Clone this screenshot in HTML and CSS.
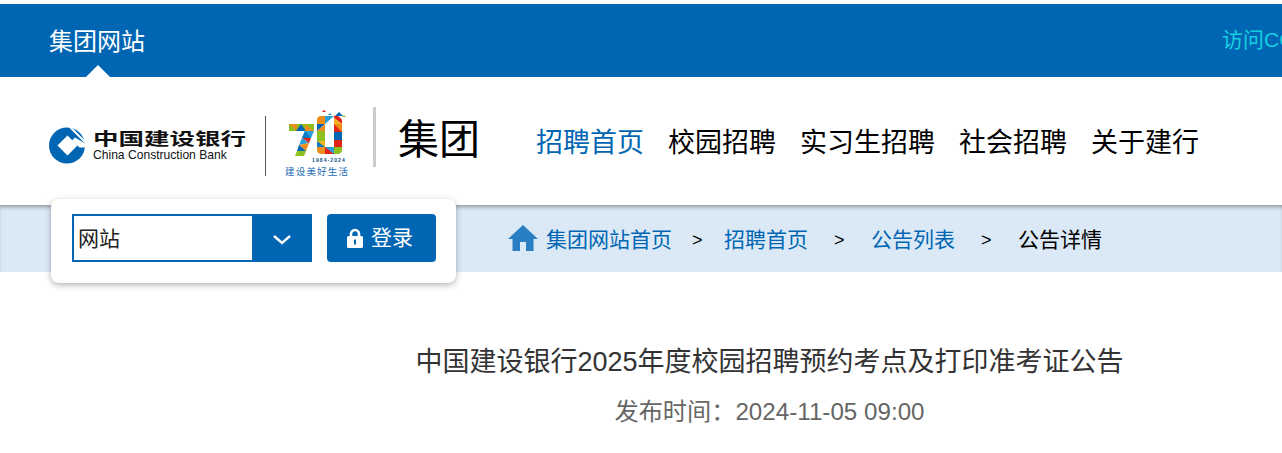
FILE: index.html
```html
<!DOCTYPE html>
<html lang="zh-CN">
<head>
    <meta charset="UTF-8">
    <title>中国建设银行2025年度校园招聘预约考点及打印准考证公告</title>
    <link rel="stylesheet" href="styles.css">
</head>
<body>
    <!-- Top bar -->
    <div class="top-bar">
        <a class="top-tab" href="#">集团网站</a>
        <a class="top-link" href="#">访问CCB</a>
    </div>

    <!-- Header -->
    <div class="header">
        <div class="logo-ccb">
            <svg class="logo-mark" viewBox="0 0 36 37" xmlns="http://www.w3.org/2000/svg">
                <circle cx="18" cy="18.500" r="18" fill="#0066b3"/>
                <path d="M20 -1L37 16" stroke="#fff" stroke-width="2" fill="none"/>
                <path d="M18.500 8.500L28.500 18.500L18.500 28.500L8.500 18.500Z" fill="#fff"/>
                <path d="M23 13.500L26 10.500L37 17V20.500H30.500Z" fill="#fff"/>
            </svg>
            <div class="logo-text">
                <div class="logo-cn">中国建设银行</div>
                <div class="logo-en">China Construction Bank</div>
            </div>
        </div>
        <div class="logo-70">
            <svg class="mark-70" viewBox="0 0 64 56" xmlns="http://www.w3.org/2000/svg">
                <!-- confetti on top of the 0 -->
                <path d="M37 4L39 2L41 4Z" fill="#e2231a"/>
                <path d="M43 7L45 5L47 7Z" fill="#2a9fd8"/>
                <path d="M47 9L49 7L51 9Z" fill="#f5b21a"/>
                <path d="M50 8L54 4L58 8Z" fill="#0066b3"/>
                <path d="M57 9L59 7L61 9Z" fill="#8cc11f"/>
                <!-- 7, top bar -->
                <path d="M4 16H12V23H4Z" fill="#f08c1a"/>
                <path d="M4 16L12 23H4Z" fill="#8cc11f"/>
                <path d="M12 16H20V23H12Z" fill="#8cc11f"/>
                <path d="M11 23L16 16L21 23Z" fill="#0066b3"/>
                <path d="M20 16H29V23H20Z" fill="#f08c1a"/>
                <path d="M20 16H29L29 23Z" fill="#8cc11f"/>
                <!-- 7, stem -->
                <path d="M20 23H29L26 30H17Z" fill="#2a9fd8"/>
                <path d="M20 23L26 30H17Z" fill="#0a7cc4"/>
                <path d="M17 30H26L24 35Z" fill="#e2231a"/>
                <path d="M17 30L24 35L14 37Z" fill="#2a9fd8"/>
                <path d="M24 35L21 43L14 37Z" fill="#f08c1a"/>
                <path d="M14 37L21 43L12 43Z" fill="#0066b3"/>
                <path d="M12 43H21L19 48H10Z" fill="#8cc11f"/>
                <!-- 0, left column -->
                <path d="M36 8H40V16H32V12Q32 8 36 8Z" fill="#f08c1a"/>
                <path d="M32 16L40 16L32 23Z" fill="#0066b3"/>
                <path d="M40 16V23L32 23Z" fill="#f08c1a"/>
                <path d="M32 23H40V33H32Z" fill="#8cc11f"/>
                <path d="M32 33L40 33V39H32Z" fill="#f5b21a"/>
                <path d="M32 33L40 39H32Z" fill="#0a7cc4"/>
                <path d="M32 39H40V46H37Q32 46 32 42Z" fill="#f08c1a"/>
                <!-- 0, top and bottom -->
                <path d="M40 8H49L49 16H40Z" fill="#2a9fd8"/>
                <path d="M40 16L49 16L49 8Z" fill="#fff"/>
                <path d="M40 39H49V46H40Z" fill="#2a9fd8"/>
                <path d="M40 39L49 46H40Z" fill="#e2231a"/>
                <!-- 0, right column -->
                <path d="M49 10L57 16V12Q56 10 53 8H49Z" fill="#e2231a"/>
                <path d="M49 10L57 16H49Z" fill="#f5b21a"/>
                <path d="M49 16H57V24H49Z" fill="#e2231a"/>
                <path d="M49 16L57 16L57 24Z" fill="#f08c1a"/>
                <path d="M49 24H57V32H49Z" fill="#0066b3"/>
                <path d="M49 32H57V39H49Z" fill="#e2231a"/>
                <path d="M49 39H57V42Q57 46 52 46H49Z" fill="#8cc11f"/>
            </svg>
            <div class="years-70">1984-2024</div>
            <div class="slogan-70">建设美好生活</div>
        </div>
        <div class="group-name">集团</div>
        <div class="main-nav">
            <a class="nav-item active" href="#">招聘首页</a>
            <a class="nav-item" href="#">校园招聘</a>
            <a class="nav-item" href="#">实习生招聘</a>
            <a class="nav-item" href="#">社会招聘</a>
            <a class="nav-item" href="#">关于建行</a>
        </div>
    </div>

    <!-- Breadcrumb band -->
    <div class="crumb-band">
        <div class="search-panel">
            <div class="site-select">
                <div class="site-value">网站</div>
                <div class="site-arrow">
                    <svg viewBox="0 0 20 12" xmlns="http://www.w3.org/2000/svg">
                        <path d="M2 2L10 9L18 2" fill="none" stroke="#fff" stroke-width="2.4"/>
                    </svg>
                </div>
            </div>
            <a class="login-btn" href="#">
                <svg viewBox="0 0 16 20" xmlns="http://www.w3.org/2000/svg">
                    <path d="M4 9V6a4 4 0 0 1 8 0V9" fill="none" stroke="#fff" stroke-width="2.600"/>
                    <path d="M1.500 8H14.500a1.500 1.500 0 0 1 1.500 1.500V18.500a1.500 1.500 0 0 1-1.500 1.500H1.500a1.500 1.500 0 0 1-1.500-1.500V9.500a1.500 1.500 0 0 1 1.500-1.500Z" fill="#fff"/>
                    <rect x="7" y="11.500" width="2" height="5" fill="#0066b3"/>
                </svg>
                登录
            </a>
        </div>
        <div class="crumbs">
            <svg class="home-icon" viewBox="0 0 30 26" xmlns="http://www.w3.org/2000/svg">
                <path d="M15 0L30 14H25.500V26H18V17H12V26H4.500V14H0Z" fill="#2a7fc4"/>
            </svg>
            <a href="#">集团网站首页</a>
            <span class="sep sep-first">&gt;</span>
            <a href="#">招聘首页</a>
            <span class="sep">&gt;</span>
            <a href="#">公告列表</a>
            <span class="sep">&gt;</span>
            <span class="current">公告详情</span>
        </div>
    </div>

    <!-- Notice -->
    <div class="notice">
        <h1>中国建设银行2025年度校园招聘预约考点及打印准考证公告</h1>
        <p>发布时间：2024-11-05 09:00</p>
    </div>
</body>
</html>
```
FILE: styles.css
```css
* { margin: 0; padding: 0; box-sizing: border-box; }
html, body { height: 453px; overflow: hidden; }
body { background: #fff; padding-top: 4px; font-family: "Liberation Sans", "Noto Sans CJK SC", sans-serif; color: #000; }
a { text-decoration: none; }

/* Top bar */
.top-bar { height: 73px; background: #0066b3; display: flex; justify-content: space-between; padding-left: 49px; overflow: hidden; white-space: nowrap; }
.top-tab { position: relative; color: #fff; font-size: 24px; line-height: 75px; }
.top-tab::after { content: ""; position: absolute; left: 37px; bottom: 0; border: 12px solid transparent; border-top: 0; border-bottom-color: #fff; }
.top-link { color: #14cfe0; font-size: 21px; line-height: 72px; width: 60px; }

/* Header */
.header { height: 128px; display: flex; align-items: flex-start; padding-left: 49px; }
.logo-ccb { display: flex; margin-top: 50px; width: 216px; height: 37px; }
.logo-mark { width: 36px; height: 37px; flex: none; }
.logo-text { margin-left: 8px; padding-top: 4px; }
.logo-cn { font-size: 17px; line-height: 18px; font-weight: 700; color: #111; transform-origin: left; transform: scaleX(1.5); width: 102px; white-space: nowrap; }
.logo-en { font-size: 12.100px; line-height: 12px; color: #111; white-space: nowrap; }
.logo-70 { width: 108px; height: 60px; margin-top: 39px; border-left: 1px solid #555; padding-left: 19px; }
.mark-70 { display: block; width: 64px; height: 56px; margin-top: -8px; }
.years-70 { font-size: 5px; line-height: 6px; font-weight: 700; letter-spacing: 1.100px; color: #0a4a86; margin: -7px 0 0 27px; white-space: nowrap; }
.slogan-70 { font-size: 9.500px; line-height: 12px; color: #1a6db5; letter-spacing: 1.200px; white-space: nowrap; margin-top: 3px; }
.group-name { margin-top: 30px; height: 60px; border-left: 3px solid #ccc; padding-left: 22px; font-size: 41px; line-height: 66px; width: 163px; flex: none; white-space: nowrap; }
.main-nav { display: flex; gap: 24px; margin-top: 46px; font-size: 27px; line-height: 40px; white-space: nowrap; }
.nav-item { color: #000; }
.nav-item.active { color: #0066b3; }

/* Breadcrumb band */
.crumb-band { height: 67px; background: #dbe9f7; box-shadow: inset 0 4px 4px -2px rgba(0, 0, 0, 0.35); position: relative; padding-left: 508px; display: flex; align-items: center; }
.search-panel { position: absolute; left: 51px; top: -6px; width: 405px; height: 84px; background: #fff; border-radius: 8px; box-shadow: 0 2px 6px rgba(0, 0, 0, 0.3); display: flex; padding: 15px 0 0 21px; }
.site-select { width: 240px; height: 48px; display: flex; border: 2px solid #0066b3; }
.site-value { flex: 1; font-size: 21px; line-height: 46px; padding-left: 4px; color: #222; }
.site-arrow { width: 60px; background: #0066b3; margin: -2px -2px -2px 0; display: flex; align-items: center; justify-content: center; }
.site-arrow svg { width: 20px; height: 12px; margin-top: 4px; }
.login-btn { margin-left: 15px; width: 109px; height: 48px; border-radius: 4px; background: #0066b3; color: #fff; font-size: 21px; line-height: 44px; padding-left: 20px; display: flex; align-items: center; gap: 8px; }
.login-btn svg { width: 16px; height: 20px; flex: none; }
.crumbs { display: flex; align-items: center; font-size: 21px; padding-bottom: 2px; white-space: nowrap; color: #000; }
.crumbs a { color: #0066b3; }
.home-icon { width: 30px; height: 26px; margin-right: 8px; }
.sep { font-size: 18px; margin: 0 25px 0 26px; width: 12px; padding-top: 6px; }
.sep-first { margin: 0 20px; }

/* Notice */
.notice { padding: 67px 0 0 257px; text-align: center; }
.notice h1 { font-size: 27px; font-weight: 400; line-height: 46px; color: #333; }
.notice p { font-size: 24.200px; line-height: 34px; margin-top: 10px; color: #666; }
```
